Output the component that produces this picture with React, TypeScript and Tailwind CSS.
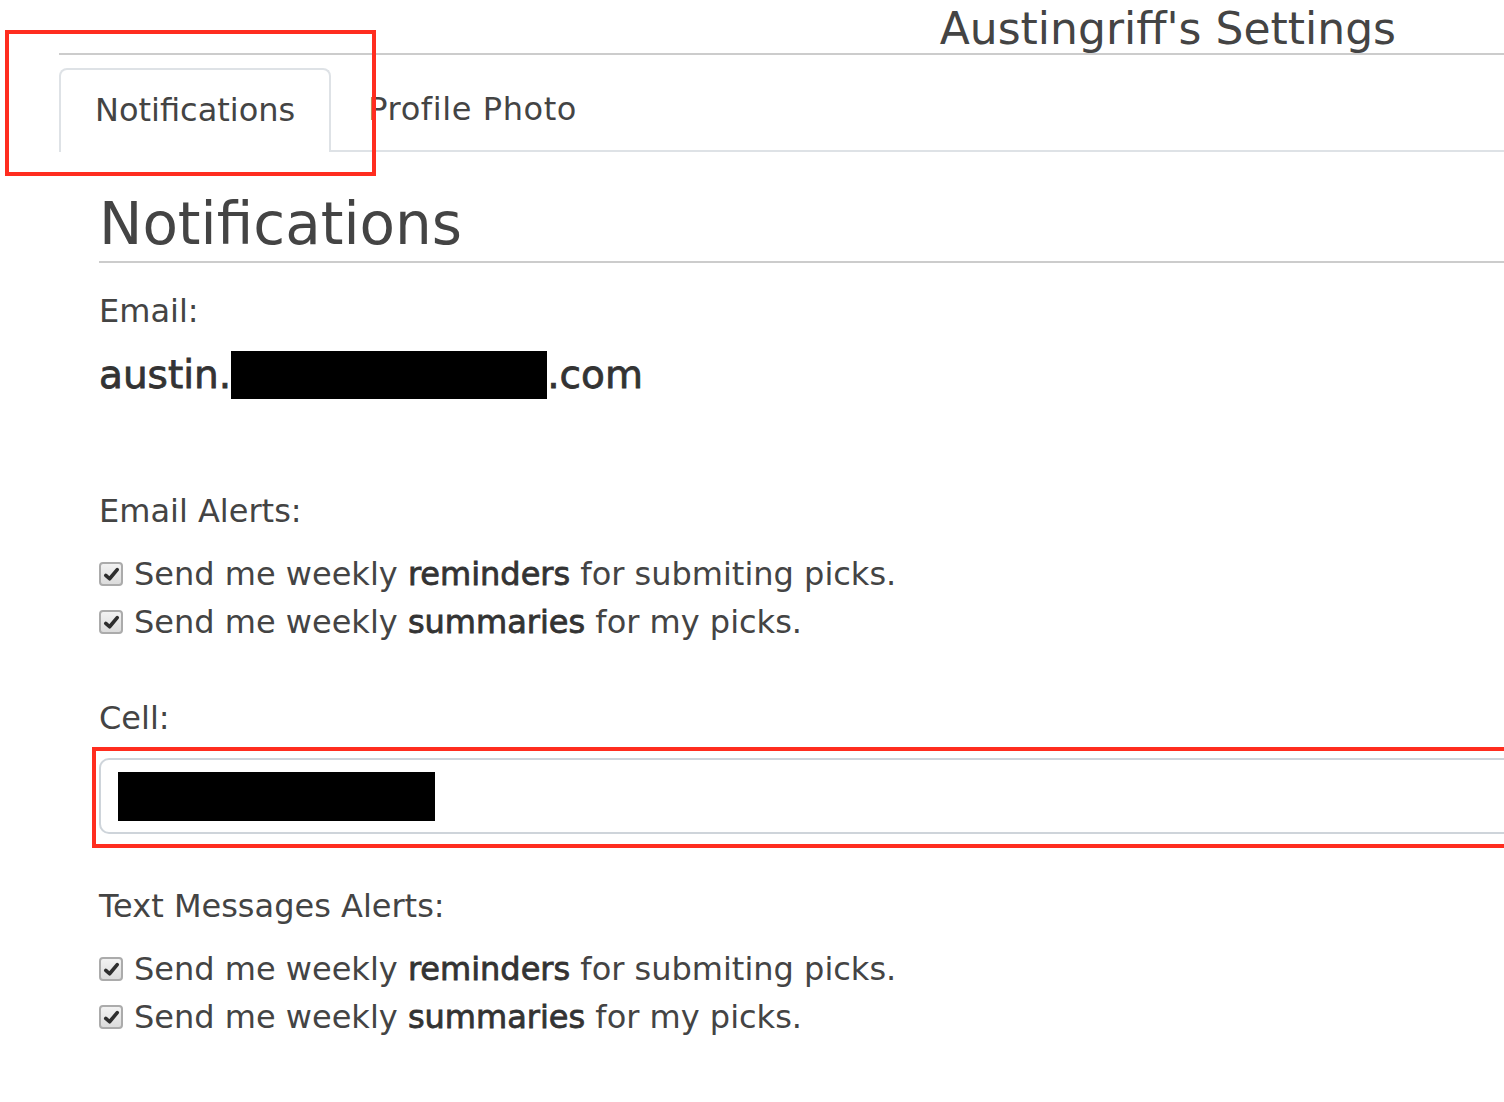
import React from 'react';

function Check() {
  return (
    <span className="inline-flex h-[24px] w-[24px] shrink-0 items-center justify-center rounded-[4px] border-2 border-[#ababab] bg-gradient-to-b from-[#f2f2f2] to-[#dcdcdc]">
      <svg viewBox="0 0 16 16" className="h-[17px] w-[17px]">
        <path d="M2.6 8.8 L6.2 12 L13.4 3.4" fill="none" stroke="#2e2e2e" strokeWidth="3.4" strokeLinecap="round" strokeLinejoin="round" />
      </svg>
    </span>
  );
}

function Strong({ children }: { children: React.ReactNode }) {
  return (
    <span className="text-[#333]" style={{ WebkitTextStroke: '0.8px #333' }}>
      {children}
    </span>
  );
}

function Row({ bold, rest }: { bold: string; rest: string }) {
  return (
    <label className="flex items-center gap-[11px] h-[48px]">
      <Check />
      <span>
        Send me weekly <Strong>{bold}</Strong> {rest}
      </span>
    </label>
  );
}

export default function App() {
  return (
    <div
      className="relative min-h-screen overflow-hidden bg-white text-[#444]"
      style={{ fontFamily: '"DejaVu Sans", sans-serif' }}
    >
      {/* page title */}
      <div className="ml-[59px] h-[55px] border-b-2 border-[#cccccc] flex items-end justify-end pr-[108px]">
        <h1 className="text-[44px] leading-none pb-[2px] text-[#444]">Austingriff's Settings</h1>
      </div>

      {/* tabs */}
      <div className="ml-[59px] mt-[13px] flex border-b-2 border-[#dee2e6] text-[32px]">
        <div className="-mb-[2px] h-[84px] flex items-center rounded-t-[8px] border-2 border-b-0 border-[#dee2e6] bg-white px-[34px] pb-[2px]">
          Notifications
        </div>
        <div className="h-[82px] flex items-center px-[37px] tracking-[0.6px]">Profile Photo</div>
      </div>

      {/* content */}
      <div className="pl-[99px]">
        <h2 className="mt-[40px] border-b-2 border-[#cccccc] pb-[5px] text-[58px] leading-[64px] text-[#444]">
          Notifications
        </h2>

        <div className="mt-[28px] text-[32px] leading-[40px]">Email:</div>
        <div className="mt-[20px] flex items-center text-[39px] text-[#333] leading-[48px]">
          <Strong>austin.</Strong>
          <span className="inline-block h-[48px] w-[316px] bg-black" />
          <Strong>.com</Strong>
        </div>

        <div className="mt-[92px] text-[32px] leading-[40px]">Email Alerts:</div>
        <div className="mt-[19px] text-[32px]">
          <Row bold="reminders" rest="for submiting picks." />
          <Row bold="summaries" rest="for my picks." />
        </div>

        <div className="mt-[52px] text-[32px] leading-[40px]">Cell:</div>
        <div className="mt-[20px] h-[76px] rounded-l-[10px] border-2 border-r-0 border-[#ced4da] flex items-center pl-[17px]">
          <span className="inline-block h-[49px] w-[317px] bg-black" />
        </div>

        <div className="mt-[52px] text-[32px] leading-[40px]">Text Messages Alerts:</div>
        <div className="mt-[19px] text-[32px]">
          <Row bold="reminders" rest="for submiting picks." />
          <Row bold="summaries" rest="for my picks." />
        </div>
      </div>

      {/* red annotation boxes */}
      <div className="pointer-events-none absolute left-[5px] top-[30px] h-[146px] w-[371px] border-4 border-[#ff2d1f]" />
      <div className="pointer-events-none absolute left-[92px] top-[747px] h-[101px] w-[1420px] border-4 border-[#ff2d1f]" />
    </div>
  );
}
